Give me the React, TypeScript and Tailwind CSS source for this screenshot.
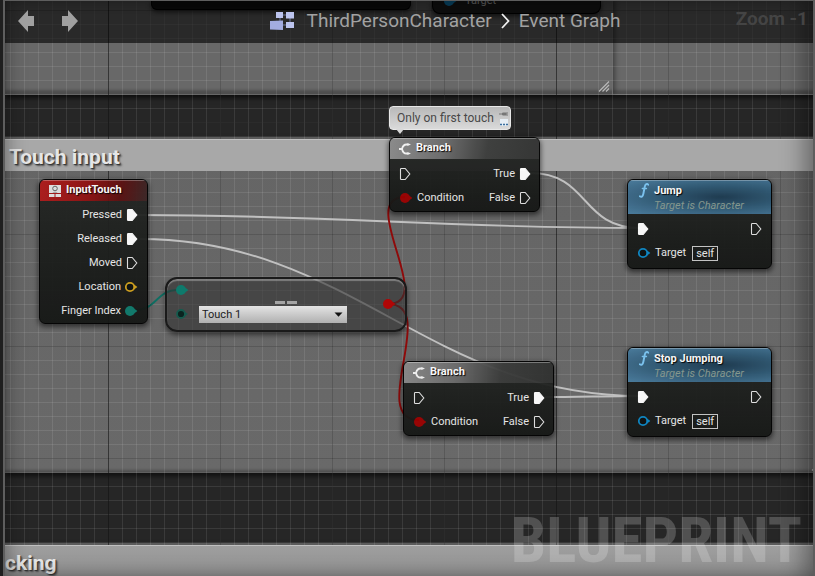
import type { ReactNode } from "react";

type PinKind = "exec" | "execOpen" | "data" | "ring";

function Pin({ kind, color = "#ffffff" }: { kind: PinKind; color?: string }) {
  if (kind === "exec" || kind === "execOpen") {
    return (
      <svg width="12" height="14" viewBox="0 0 12 14" className="shrink-0" aria-hidden="true">
        <path
          d="M2.2 1.5 H6.2 L10.8 7 L6.2 12.5 H2.2 Q1.5 12.5 1.5 11.8 V2.2 Q1.5 1.5 2.2 1.5 Z"
          fill={kind === "exec" ? "#fff" : "none"}
          stroke={kind === "exec" ? "#fff" : "#e4e4e4"}
          strokeWidth="1.1"
        />
      </svg>
    );
  }
  return (
    <svg width="14" height="12" viewBox="0 0 14 12" className="shrink-0" aria-hidden="true">
      <path d="M9 2.8 L13.4 6 L9 9.2 Z" fill={color} />
      {kind === "data" ? (
        <circle cx="6" cy="6" r="5" fill={color} />
      ) : (
        <circle cx="6" cy="6" r="4.2" fill="#0c0f0e" stroke={color} strokeWidth="1.8" />
      )}
    </svg>
  );
}

function Node({ place, header, children }: { place: string; header: ReactNode; children: ReactNode }) {
  return (
    <article
      className={`absolute z-20 overflow-hidden rounded-md border border-black bg-gradient-to-b from-[#242624] to-[#151715] text-[11px] text-[#ececec] opacity-95 shadow-[0_2px_5px_1px_rgba(0,0,0,0.55)] ${place}`}
    >
      {header}
      {children}
    </article>
  );
}

const rowBase = "flex h-6 items-center";

function BranchNode({ place }: { place: string }) {
  return (
    <Node
      place={place}
      header={
        <header className="flex h-[21px] items-center gap-1 bg-[linear-gradient(100deg,#8a8a8a_0%,#6c6c6c_35%,#3a3b3a_65%,#303130_100%)] pl-2 shadow-[inset_0_1px_0_rgba(255,255,255,0.35)]">
          <svg width="14" height="12" viewBox="0 0 14 12" fill="none" stroke="#f4f4f4" strokeWidth="1.8" aria-hidden="true">
            <path d="M1 6 H4 M10 1.5 H8.5 C5 1.5 4.5 4 4 6 C4.5 8 5 10.5 8.5 10.5 H10" />
            <path d="M9.5 0 L13 1.5 L9.5 3 Z M9.5 9 L13 10.5 L9.5 12 Z" fill="#f4f4f4" stroke="none" />
          </svg>
          <h2 className="font-bold text-white [text-shadow:1px_1px_1px_#000]">Branch</h2>
        </header>
      }
    >
      <div className="pt-[3px] pb-px">
        <div className={`${rowBase} justify-between pr-2 pl-[9px]`}>
          <Pin kind="execOpen" />
          <span className="flex items-center gap-1">True <Pin kind="exec" /></span>
        </div>
        <div className={`${rowBase} justify-between pr-2 pl-[9px]`}>
          <span className="flex items-center gap-1"><Pin kind="data" color="#9a0000" />Condition</span>
          <span className="flex items-center gap-1">False <Pin kind="execOpen" /></span>
        </div>
      </div>
    </Node>
  );
}

function FunctionNode({ place, title }: { place: string; title: string }) {
  return (
    <Node
      place={place}
      header={
        <header className="flex h-[34px] gap-[5px] bg-[radial-gradient(ellipse_at_65%_50%,#1c3a50_0%,#2e5873_45%,#4a7da0_100%)] pt-[3px] pl-[11px] shadow-[inset_0_1px_0_rgba(255,255,255,0.3)]">
          <svg width="10" height="15" viewBox="0 0 10 15" fill="none" stroke="#7cc6f4" strokeLinecap="round" aria-hidden="true">
            <path d="M9.3 1.8 C8.2 .3 6.4 1 5.8 3.5 L4.3 11 C3.8 13.8 2.3 14.3 .8 13.2" strokeWidth="1.9" />
            <path d="M3.3 5.5 H7.5" strokeWidth="1.3" />
          </svg>
          <div className="leading-[15px]">
            <h2 className="font-bold text-white [text-shadow:1px_1px_1px_#000]">{title}</h2>
            <p className="text-[#869a90] italic">Target is Character</p>
          </div>
        </header>
      }
    >
      <div className="pt-[3px] pb-[3px]">
        <div className={`${rowBase} justify-between px-[9px]`}>
          <Pin kind="exec" />
          <Pin kind="execOpen" />
        </div>
        <div className={`${rowBase} gap-1 pl-[9px]`}>
          <Pin kind="ring" color="#0b86c4" />
          Target
          <span className="ml-[2px] border border-[#c8c8c8] px-[3px] leading-[13px]">self</span>
        </div>
      </div>
    </Node>
  );
}

function Comment({ place, bar, title, children }: { place: string; bar: string; title: string; children?: ReactNode }) {
  return (
    <section
      className={`absolute right-0 left-[5px] border-t-2 border-[#5c5c5c] bg-gradient-to-b from-[#656565] to-[#696969] shadow-[0_3px_5px_rgba(0,0,0,0.6),inset_0_-3px_3px_rgba(0,0,0,0.25)] ${place}`}
    >
      <header className={`relative z-10 h-8 border-t border-[#c0c0c0] ${bar}`}>
        <h1 className="text-[21px] leading-[35px] font-bold text-[#e6e6e6] [text-shadow:1px_1px_1px_#333,2px_2px_2px_#555]">{title}</h1>
      </header>
      {children}
    </section>
  );
}

function wire(x1: number, y1: number, x2: number, y2: number, pull: number) {
  return `M${x1} ${y1} C${x1 + pull} ${y1} ${x2 - pull} ${y2} ${x2} ${y2}`;
}

const wires = [
  { d: wire(137, 215, 640, 228, 200), color: "#c0c0c0" },
  { d: wire(140, 239, 640, 396, 210), color: "#c0c0c0" },
  { d: wire(530, 173, 640, 228, 60), color: "#c0c0c0" },
  { d: wire(545, 397, 640, 396, 30), color: "#c0c0c0" },
  { d: wire(135, 310, 178, 290, 22), color: "#0e6f63" },
  { d: wire(388, 304, 405, 197, 50), color: "#8f0a0a" },
  { d: wire(388, 304, 419, 420, 52), color: "#8f0a0a" },
];

function Handle({ place }: { place: string }) {
  return (
    <svg className={`absolute ${place}`} width="12" height="11" viewBox="0 0 12 11" stroke="#b8b8b8" strokeWidth="1.2" aria-hidden="true">
      <path d="M1 10.5 L11 .5 M4.5 10.5 L11 4 M8 10.5 L11 7.5" />
    </svg>
  );
}

function Arrow({ flip }: { flip?: boolean }) {
  return (
    <svg width="18" height="24" viewBox="0 0 18 24" className={flip ? "rotate-180" : ""} aria-hidden="true">
      <path d="M0 12 L10 1 V7 H16 V17 H10 V23 Z" fill="#a0a0a0" />
    </svg>
  );
}

export default function App() {
  return (
    <main className="relative min-h-screen overflow-hidden bg-[#262626] font-['Roboto','Liberation_Sans',sans-serif]">
      {/* comment regions */}
      <section className="absolute top-0 right-0 left-[5px] h-[95px] border-b border-[#6a6a6a] bg-[#686868] shadow-[0_3px_5px_rgba(0,0,0,0.6),inset_0_-4px_3px_rgba(0,0,0,0.25)]" />
      <section className="absolute top-0 left-[5px] h-[94px] w-[608px] border-r border-[#606060] shadow-[2px_0_5px_rgba(0,0,0,0.4)]">
        <Handle place="right-[2px] bottom-[2px]" />
      </section>
      <Comment place="top-[137px] h-[336px]" bar="bg-[#a8a8a8] pl-1" title="Touch input">
        <Handle place="right-[-8px] bottom-[2px]" />
      </Comment>
      <Comment place="top-[543px] bottom-0" bar="bg-gradient-to-b from-[#9e9e9e] to-[#929292]" title="cking" />

      {/* canvas grid */}
      <div className="pointer-events-none absolute inset-0 bg-[linear-gradient(to_right,rgba(0,0,0,0.4)_1px,transparent_1px),linear-gradient(to_right,rgba(0,0,0,0.25)_1px,transparent_1px),linear-gradient(to_bottom,rgba(0,0,0,0.25)_1px,transparent_1px),linear-gradient(to_right,rgba(255,255,255,0.09)_1px,transparent_1px),linear-gradient(to_bottom,rgba(255,255,255,0.09)_1px,transparent_1px)] bg-[length:448px_112px,112px_112px,112px_112px,14px_14px,14px_14px] bg-[position:108px_10px,108px_10px,108px_10px,10px_10px,10px_10px]" />

      {/* nodes scrolled under the toolbar */}
      <div className="absolute top-0 left-[151px] z-20 h-[10px] w-[260px] rounded-b-md border border-t-0 border-black bg-[#141414] shadow-[0_2px_5px_rgba(0,0,0,0.6)]" />
      <div className="absolute top-0 left-[432px] z-20 h-[14px] w-[169px] rounded-b-lg border border-t-0 border-black bg-[#202020] shadow-[0_2px_5px_rgba(0,0,0,0.6)]">
        <div className="-mt-[5px] flex items-center gap-2 pl-[10px] text-[11px] leading-[12px] text-[#d0d0d0]">
          <Pin kind="data" color="#1294d8" />
          Target
        </div>
      </div>

      <svg className="pointer-events-none absolute top-0 left-0 z-20 overflow-visible" width="815" height="576" fill="none" aria-hidden="true">
        {wires.map((w) => (
          <path key={w.d} d={w.d} stroke={w.color} strokeWidth="1.9" />
        ))}
      </svg>

      <Node
        place="top-[179px] left-[39px] w-[109px]"
        header={
          <header className="flex h-[21px] items-center gap-[5px] bg-[linear-gradient(100deg,#b01c1c_0%,#8f1111_45%,#5a1010_75%,#3a2525_100%)] pl-[9px] shadow-[inset_0_1px_0_rgba(255,255,255,0.3)]">
            <svg width="12" height="12" viewBox="0 0 12 12" aria-hidden="true">
              <path d="M0 0 H12 V8 H0 Z M0 9 H5.5 V12 H0 Z M6.5 9 H12 V12 H6.5 Z" fill="#e4e4e4" />
              <circle cx="6" cy="3.5" r="2.3" fill="#e4e4e4" stroke="#666" />
              <path d="M3.5 8 C4 6.3 8 6.3 8.5 8" fill="#aaa" />
            </svg>
            <h2 className="font-bold text-white [text-shadow:1px_1px_1px_#000]">InputTouch</h2>
          </header>
        }
      >
        <ul className="pt-[2px] pr-[9px]">
          <li className={`${rowBase} justify-end gap-1`}>Pressed <Pin kind="exec" /></li>
          <li className={`${rowBase} justify-end gap-1`}>Released <Pin kind="exec" /></li>
          <li className={`${rowBase} justify-end gap-1`}>Moved <Pin kind="execOpen" /></li>
          <li className={`${rowBase} justify-end gap-[3px]`}>Location <Pin kind="ring" color="#d0a01c" /></li>
          <li className={`${rowBase} justify-end gap-[3px]`}>Finger Index <Pin kind="data" color="#0e7a6c" /></li>
        </ul>
      </Node>

      {/* equality operator */}
      <article className="absolute top-[277px] left-[165px] z-20 flex h-[55px] w-[242px] rounded-xl border-2 border-[#1a1a1a] bg-[#303030]/60 pr-[9px] pl-2 shadow-[0_3px_5px_rgba(0,0,0,0.5),inset_0_2px_1px_rgba(255,255,255,0.3)]">
        <div className="flex w-[14px] flex-col justify-between pt-[5px] pb-[10px]">
          <Pin kind="data" color="#0e7a6c" />
          <svg width="14" height="12" viewBox="0 0 14 12" aria-hidden="true">
            <path d="M9 3.5 L13 6 L9 8.5 Z" fill="#155b4e" />
            <circle cx="6" cy="6" r="4" fill="#0a2420" stroke="#155b4e" strokeWidth="1.8" />
          </svg>
        </div>
        <div className="flex flex-1 flex-col pt-[22px] pl-[10px]">
          <div className="flex h-[5px] w-[174px] justify-center gap-[2px]" role="img" aria-label="equals">
            <span className="h-[3px] w-[10px] bg-[#a4a4a4]" />
            <span className="h-[3px] w-[10px] bg-[#a4a4a4]" />
          </div>
          <div className="relative w-[148px]">
            <select
              aria-label="Finger"
              className="block h-[17px] w-full appearance-none bg-gradient-to-b from-[#e4e4e4] to-[#b0b0b0] pl-[3px] text-[11px] leading-[17px] text-[#1c1c1c] outline-none"
            >
              <option>Touch 1</option>
            </select>
            <svg className="pointer-events-none absolute top-[6px] right-1" width="9" height="5" viewBox="0 0 9 5" aria-hidden="true">
              <path d="M.5 .5 H8.5 L4.5 4.8 Z" fill="#111" />
            </svg>
          </div>
        </div>
        <div className="flex pt-[19px]">
          <Pin kind="data" color="#b00606" />
        </div>
      </article>

      <BranchNode place="top-[137px] left-[389px] w-[151px]" />
      <BranchNode place="top-[361px] left-[403px] w-[151px]" />
      <FunctionNode place="top-[179px] left-[627px] w-[145px]" title="Jump" />
      <FunctionNode place="top-[347px] left-[627px] w-[145px]" title="Stop Jumping" />

      {/* note bubble */}
      <aside className="absolute top-[106px] left-[389px] z-30 flex h-6 w-[122px] items-center justify-between rounded border border-[#e8e8e8] bg-gradient-to-b from-[#b8b8b8] to-[#dadada] pr-px pl-[7px] text-xs text-[#484848]">
        Only on first touch
        <svg width="10" height="17" viewBox="0 0 10 17" aria-hidden="true">
          <path d="M0 4 H3 M3.5 3 H7 V5 H3.5 Z M8 2 V6" stroke="#777" fill="#777" />
          <path d="M1 9 H9 V16 H1 Z" fill="#e6eef5" />
          <path d="M1 14.5 H9" stroke="#3c6f9f" strokeWidth="1.5" strokeDasharray="2 1" />
        </svg>
        <svg className="absolute top-full left-[6px]" width="8" height="5" viewBox="0 0 8 5" aria-hidden="true">
          <path d="M0 0 H8 L4 5 Z" fill="#d8d8d8" />
        </svg>
      </aside>

      <p className="pointer-events-none absolute right-[13px] bottom-0 z-20 font-['Roboto_Condensed','Roboto',sans-serif] text-[63px] leading-[70px] font-bold text-white/20">BLUEPRINT</p>

      {/* toolbar */}
      <header className="relative z-40 flex h-[43px] items-start bg-black/60 pl-[18px]">
        <nav className="flex gap-6 pt-[9px]" aria-label="History">
          <button type="button" aria-label="Back"><Arrow /></button>
          <button type="button" aria-label="Forward"><Arrow flip /></button>
        </nav>
        <nav className="flex flex-1 items-center justify-center pt-2 pl-[101px] text-[19px] leading-[26px] text-[#a2a2a2]" aria-label="Breadcrumb">
          <svg width="26" height="22" viewBox="0 0 26 22" className="mr-3" aria-hidden="true">
            <path d="M13 5 H18 M11 8 V12 M21 8 V13 M13 15 H18" stroke="#6c749c" strokeWidth="1" />
            <path d="M7 2 H14 V8 H7 Z M17 2 H25 V8.5 H17 Z M17 12 H25 V18 H17 Z" fill="#bcc4ee" />
            <path d="M1 11 L14 10.5 V20 L1 19.5 Z" fill="#a3ace0" />
          </svg>
          <a href="#character">ThirdPersonCharacter</a>
          <svg width="9" height="16" viewBox="0 0 9 16" className="mx-[9px]" fill="none" stroke="#f0f0f0" strokeWidth="1.8" aria-hidden="true">
            <path d="M1 1 L7.5 8 L1 15" />
          </svg>
          <a href="#graph">Event Graph</a>
        </nav>
        <p className="w-[105px] pt-[6px] pr-[7px] text-right text-[19px] leading-[26px] font-bold text-[#444]">Zoom -1</p>
      </header>

      {/* window frame and edge shading */}
      <div className="pointer-events-none absolute inset-y-0 right-[2px] left-[5px] z-30 shadow-[inset_-14px_0_24px_-6px_rgba(0,0,0,0.4),inset_10px_0_20px_-8px_rgba(0,0,0,0.35)]" />
      <div className="pointer-events-none absolute inset-0 z-50 border-l-[3px] border-[#1f1f1f]">
        <div className="h-full border-t border-r-2 border-l-2 border-[#5e5e5e]" />
      </div>
    </main>
  );
}
